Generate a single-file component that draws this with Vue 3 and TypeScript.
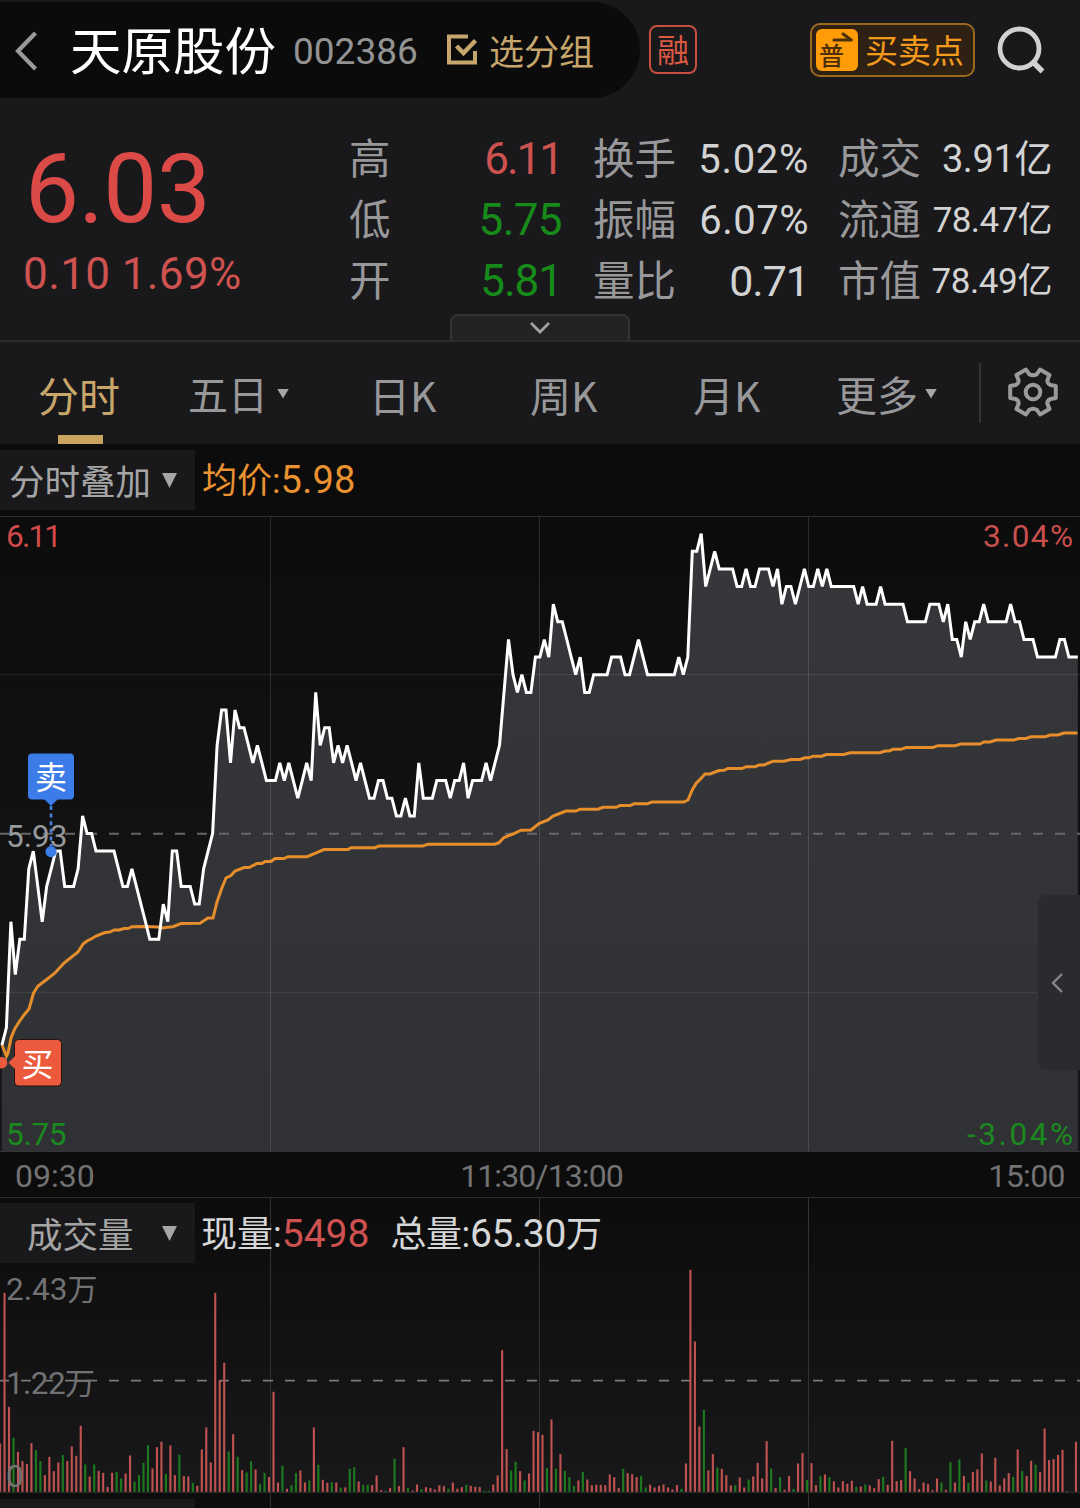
<script setup lang="ts">
interface Quote {
  label: string
  value: string
  tone: 'up' | 'down' | 'plain'
  size: number
  tracking: number
}

const quoteColumns: { name: string; rows: Quote[] }[] = [
  {
    name: 'range',
    rows: [
      { label: '高', value: '6.11', tone: 'up', size: 44, tracking: -2 },
      { label: '低', value: '5.75', tone: 'down', size: 44, tracking: -0.6 },
      { label: '开', value: '5.81', tone: 'down', size: 44, tracking: -1 },
    ],
  },
  {
    name: 'ratio',
    rows: [
      { label: '换手', value: '5.02%', tone: 'plain', size: 40, tracking: 0.7 },
      { label: '振幅', value: '6.07%', tone: 'plain', size: 40, tracking: 0.5 },
      { label: '量比', value: '0.71', tone: 'plain', size: 43, tracking: -1 },
    ],
  },
  {
    name: 'amount',
    rows: [
      { label: '成交', value: '3.91亿', tone: 'plain', size: 38, tracking: -0.4 },
      { label: '流通', value: '78.47亿', tone: 'plain', size: 35, tracking: -0.6 },
      { label: '市值', value: '78.49亿', tone: 'plain', size: 35, tracking: -0.4 },
    ],
  },
]

const STEP = 4.483
const BASE_Y = 833.5
const CENT = 17.64

// Price per minute, in cents above or below the previous close of 5.93
const cents: number[] = [
  -12, -11, -5, -8, -6, -6, -2, -1, -3, -5, -3, -2, -1, -1, -3, -3, -3, -2, 1, 0,
  0, -1, -1, -1, -1, -1, -2, -3, -3, -2, -3, -4, -5, -6, -6, -6, -4, -5, -1, -1,
  -3, -3, -3, -4, -4, -2, -1, 0, 5, 7, 7, 4, 7, 6, 6, 5, 4, 5, 4, 3,
  3, 3, 4, 3, 4, 3, 2, 3, 4, 3, 8, 5, 6, 6, 4, 5, 4, 5, 4, 3,
  4, 3, 2, 2, 3, 3, 2, 2, 1, 1, 2, 1, 1, 4, 2, 2, 2, 3, 3, 3,
  2, 3, 3, 4, 2, 3, 3, 3, 4, 3, 4, 5, 8, 11, 9, 8, 9, 8, 8, 10,
  10, 11, 10, 13, 12, 12, 11, 10, 9, 10, 8, 8, 9, 9, 9, 9, 10, 10, 10, 9,
  9, 10, 11, 10, 9, 9, 9, 9, 9, 9, 9, 10, 9, 10, 16, 16, 17, 14, 15, 16,
  15, 15, 15, 15, 14, 14, 15, 14, 14, 15, 15, 15, 14, 15, 13, 14, 14, 13, 14, 15,
  14, 14, 15, 14, 15, 14, 14, 14, 14, 14, 14, 13, 14, 13, 13, 13, 14, 13, 13, 13,
  13, 13, 12, 12, 12, 12, 12, 13, 13, 13, 12, 13, 11, 11, 10, 12, 11, 12, 12, 13,
  12, 12, 12, 12, 12, 13, 12, 12, 11, 11, 11, 10, 10, 10, 10, 10, 11, 11, 10, 10,
  10,
]

const pricePoints = cents
  .map((c, i) => `${(1.9 + i * STEP).toFixed(1)},${(BASE_Y - c * CENT).toFixed(1)}`)
  .join(' ')
const areaPoints = `1.9,1151 ${pricePoints} 1077.8,1151`

const averagePoints = `2,1045 6.5,1056 8,1053 11,1038 14.7,1029 19,1022 24,1015 29,1009 33.5,993 38,986
 46,980 55,973 64,963 78,952 83,944 87,941 91,939 96,936 105,932.5 110,932 114,930 119,930 124,928.5
 128,928.5 132,926.7 145,926.5 158,927 163,928 167,927.3 173,926.7 181,923.5 200,923.3 208,918 213,918
 217,902 221.5,889 226,878 231,875.5 235,871 244,867.5 249,867.5 257,863.5 262,863.5 265,861.5 271,861.5
 275,858.5 284,858.5 288,856.7 307,856.7 315,853.3 324,849.5 348,849.5 351,847.7 375,847.7 379,845.9
 423,845.9 428,844.2 495,844.2 499,842.6 504,837.5 513,834 521,830.2 531,830 539,823.5 548,820 553,816
 566,811 576,811 580,809.2 598,809.2 603,807.3 616,807.3 620,805.6 630,805.6 634,803.8 647,803.8 652,802
 684,802 688,800 692,790.5 696,783.5 700,779.5 705,774 710,774 719,770.5 724,770.3 728,768.5 742,768.5
 746,766.7 755,766.7 759,765 764,765 773,761.2 784,761.2 791,759.5 800,759.5 805,757.8 809,757.8 813,756.2
 822,756.2 826,754.5 844,754.5 850,752.7 880,752.7 885,751 889,751 893,749.3 901,749.3 906,747.5 933,747.5
 938,745.7 955,745.7 961,744 980,744 984,742 990,742 996,740 1014,740 1019,738.5 1026,738.5 1031,736.8
 1045,736.8 1050,735 1058,735 1064,733 1077.5,733`

// Volume per minute in thirds of a pixel; negative values are falling minutes
const volumes: number[] = [
  145, 597, 255, -162, 120, 92, 83, 146, -125, -92, 50, 105, 62, 88, -110, 92, 136, 108, 198, -82,
  46, -82, 63, 57, 15, 57, -60, -40, 55, 109, -31, -50, -87, -140, 70, 134, 150, -53, 139, 50,
  -111, 47, 46, -27, 18, 127, 193, 88, 597, 334, 387, -121, 173, -105, 65, -58, -92, 67, -24, -57,
  44, 300, 28, -78, 9, -20, -56, 64, 28, -34, 193, -81, 36, 27, -29, 28, -12, 13, -69, -74,
  31, -21, -21, 20, 49, 5, -3, 11, -99, 17, 134, -11, 4, 22, -8, 14, 11, 7, 20, 17,
  -9, 28, 9, 14, -21, 18, 15, 14, -3, -3, 22, 49, 425, 128, -64, -90, 62, -34, 55, 183,
  179, 171, -71, 217, -69, 113, -63, -44, -18, 34, -59, 37, 20, 21, 21, 20, 52, 44, 11, -69,
  56, 53, 44, -48, -13, 21, 13, 18, 22, 13, 7, 20, -9, 85, 666, 451, 196, -246, 64, 113,
  -73, 69, 50, 19, -20, 43, 13, -37, 46, 87, 40, 152, -70, 11, -44, 6, 47, -9, 85, 116,
  -36, 86, 20, -47, 52, -44, 31, 13, 32, 24, 33, -15, 16, -22, 19, 11, 38, -45, 21, 153,
  32, 35, -132, 62, 40, 8, 28, 23, 5, 40, -28, 6, -89, 28, -97, 48, -27, 59, 67, 115,
  -34, 31, 102, 19, 40, 56, -45, 127, -62, 48, 93, -81, 59, 190, 95, 98, 111, 126, -2, 0,
  150,
]

const bars = volumes.map((v, i) => ({
  x: i * STEP - 1,
  y: 1491.8 - Math.abs(v) / 3,
  h: Math.abs(v) / 3,
  fill: v < 0 ? '#1d7a1f' : '#c05351',
}))

const columns = [270.5, 539.5, 808.5]
</script>

<template>
  <div class="screen">
    <header class="topbar">
      <div class="identity">
        <svg class="back" width="28" height="44" viewBox="0 0 28 44">
          <path d="M24.5 4 L7 22 L24.5 40" fill="none" stroke="#9b9b9b" stroke-width="4.2" />
        </svg>
        <span class="name">天原股份</span>
        <span class="code">002386</span>
        <svg class="check" width="32" height="32" viewBox="0 0 32 32" fill="none" stroke="#c6a66c">
          <path d="M22 2.5 H3 V28.5 H29 V17" stroke-width="4" />
          <path d="M10.5 12 L17.5 19 L29.5 6.5" stroke-width="4.4" />
        </svg>
        <span class="group">选分组</span>
      </div>
      <span class="margin-badge">融</span>
      <div class="trade-points">
        <span class="trade-icon">
          <svg width="24" height="11" viewBox="0 0 24 11"><path d="M1 8.8 H20 L11 2.2" fill="none" stroke="#4c300a" stroke-width="3.4" stroke-linecap="round" stroke-linejoin="round" /></svg>
          <b>普</b>
        </span>
        <span class="trade-text">买卖点</span>
      </div>
      <svg class="search" width="50" height="52" viewBox="0 0 50 52" fill="none" stroke="#d0d1d2">
        <circle cx="23.5" cy="23.5" r="19.5" stroke-width="4.8" />
        <path d="M37 37 L46.5 46.5" stroke-width="5.5" />
      </svg>
    </header>

    <section class="summary">
      <div class="last">
        <div class="price">6.03</div>
        <div class="change">0.10 1.69%</div>
      </div>
      <div v-for="col in quoteColumns" :key="col.name" class="quotes" :class="col.name">
        <div v-for="q in col.rows" :key="q.label" class="quote">
          <span class="label">{{ q.label }}</span>
          <span :class="q.tone" :style="{ fontSize: q.size + 'px', letterSpacing: q.tracking + 'px' }">{{ q.value }}</span>
        </div>
      </div>
      <div class="expander">
        <svg width="22" height="14" viewBox="0 0 22 14"><path d="M2 2 L11 11 L20 2" fill="none" stroke="#a2a2a3" stroke-width="2.8" /></svg>
      </div>
    </section>

    <nav class="tabs">
      <span class="tab active">分时</span>
      <span class="tab five">五日<i class="caret small"></i></span>
      <span class="tab day">日K</span>
      <span class="tab week">周K</span>
      <span class="tab month">月K</span>
      <span class="tab more">更多<i class="caret small"></i></span>
      <span class="divider"></span>
      <svg class="gear" width="54" height="54" viewBox="-27 -27 54 54" fill="none" stroke="#9a9a9b" stroke-width="4" stroke-linejoin="round">
        <path d="M-7 -22.5 L-4 -18 Q0 -15.5 4 -18 L7 -22.5 L16.5 -17 L14.3 -11.5 Q14.5 -8 17.5 -7 L22.8 -6 V6 L17.5 7 Q14.5 8 14.3 11.5 L16.5 17 L7 22.5 L4 18 Q0 15.5 -4 18 L-7 22.5 L-16.5 17 L-14.3 11.5 Q-14.5 8 -17.5 7 L-22.8 6 V-6 L-17.5 -7 Q-14.5 -8 -14.3 -11.5 L-16.5 -17 Z" />
        <circle r="7.3" />
      </svg>
    </nav>

    <div class="overlay-row">
      <div class="select">分时叠加<i class="caret"></i></div>
      <span class="average">均价:<em>5.98</em></span>
    </div>

    <div class="price-pane">
      <svg class="plot" width="1080" height="636" viewBox="0 516 1080 636">
        <defs>
          <linearGradient id="area" x1="0" y1="0" x2="0" y2="1">
            <stop offset="0" stop-color="#36373b" />
            <stop offset="1" stop-color="#303135" />
          </linearGradient>
        </defs>
        <polygon :points="areaPoints" fill="url(#area)" />
        <g stroke="#fff" stroke-opacity="0.13">
          <path d="M0 516.5 H1080 M0 1151.5 H1080" />
          <path v-for="x in columns" :key="x" :d="`M${x} 517 V1151`" stroke-opacity="0.13" />
        </g>
        <path d="M0 674.5 H1080 M0 992.5 H1080" stroke="#fff" stroke-opacity="0.07" stroke-width="1.6" />
        <path d="M-1 833.7 H1080" stroke="#65666a" stroke-width="2" stroke-dasharray="10 12" />
        <polyline :points="averagePoints" fill="none" stroke="#e58e2b" stroke-width="3" />
        <polyline :points="pricePoints" fill="none" stroke="#fff" stroke-width="3" />
        <g class="axis">
          <text x="6" y="547" textLength="56" fill="#d14a49">6.11</text>
          <text x="983" y="547" textLength="90" fill="#c94f4d">3.04%</text>
          <text x="6" y="847" fill="#98999b">5.93</text>
          <text x="6" y="1145" textLength="60.5" fill="#1b8a1e">5.75</text>
          <text x="967" y="1145" textLength="106" fill="#1b8a1e">-3.04%</text>
        </g>
        <path d="M51 806 V846" stroke="#4a80dc" stroke-width="2.6" stroke-dasharray="4 3.6" />
        <circle cx="51" cy="851.6" r="5.6" fill="#3d7ee6" />
        <path d="M44 799 H58 L51 806 Z" fill="#3b7ce8" />
        <rect x="28" y="753.5" width="46" height="46" rx="4" fill="#3b7ce8" />
        <text class="mark" x="51" y="789">卖</text>
        <circle cx="1.5" cy="1062.7" r="5.8" fill="#ec5a3e" />
        <rect x="14.5" y="1039.5" width="47" height="46.5" rx="4" fill="#ec5a3e" stroke="#26130f" stroke-width="1" />
        <path d="M16 1055 V1070 L8.5 1062.7 Z" fill="#ec5a3e" />
        <text class="mark" x="37.5" y="1076">买</text>
      </svg>
      <div class="drawer">
        <svg width="14" height="22" viewBox="0 0 14 22"><path d="M12 2 L3 11 L12 20" fill="none" stroke="#85868a" stroke-width="2.4" /></svg>
      </div>
    </div>

    <div class="times"><span>09:30</span><span class="noon">11:30/13:00</span><span class="close">15:00</span></div>

    <div class="volume-pane">
      <svg class="plot" width="1080" height="311" viewBox="0 1197 1080 311">
        <rect x="0" y="1493" width="1080" height="15" fill="#0d0d0d" />
        <rect x="0" y="1499" width="195" height="9" fill="#19191b" />
        <path d="M0 1197.5 H1080 M0 1492.5 H1080" stroke="#2a2a2c" />
        <path v-for="x in columns" :key="x" :d="`M${x} 1197 V1508`" stroke="#313133" />
        <path d="M-1 1380.7 H1080" stroke="#77787a" stroke-width="1.8" stroke-dasharray="10 12" />
        <rect v-for="(b, i) in bars" :key="i" :x="b.x" :y="b.y" width="2.1" :height="b.h" :fill="b.fill" />
        <g class="axis" fill="#727274">
          <text x="6" y="1300">2.43<tspan font-size="30">万</tspan></text>
          <text x="6" y="1394" textLength="89">1.22<tspan font-size="30">万</tspan></text>
          <text x="6" y="1487">0</text>
        </g>
      </svg>
      <div class="volume-head">
        <div class="select volume">成交量<i class="caret"></i></div>
        <span class="now">现量:<em class="up">5498</em></span>
        <span class="total">总量:<em>65.30</em>万</span>
      </div>
    </div>
  </div>
</template>

<style>
body {
  background: #19191b;
}
</style>

<style scoped>
.screen {
  width: 1080px;
  height: 1508px;
  overflow: hidden;
  background: #19191b;
  font-family: Roboto, 'Noto Sans CJK SC', sans-serif;
  color: #d6d7d8;
  white-space: nowrap;
}
em, i, b {
  font-style: normal;
  font-weight: 400;
}
.topbar {
  display: flex;
  align-items: flex-start;
  height: 98px;
}
.identity {
  display: flex;
  align-items: center;
  box-sizing: border-box;
  width: 640px;
  height: 96px;
  margin-top: 2px;
  padding: 0 0 2px 11px;
  background: #0b0b0b;
  border-radius: 0 48px 48px 0;
}
.back {
  margin-top: 4px;
}
.name {
  margin-left: 31px;
  width: 223px;
  color: #fff;
  font-size: 51.5px;
  line-height: 60px;
  padding-top: 8px;
}
.code {
  width: 153px;
  color: #939394;
  font-size: 37px;
  line-height: 44px;
  padding-top: 6px;
}
.check {
  margin-top: 2px;
}
.group {
  margin-left: 11px;
  padding-top: 9px;
  color: #c6a66c;
  font-size: 35px;
  line-height: 44px;
}
.margin-badge {
  box-sizing: border-box;
  width: 48px;
  height: 49px;
  margin: 25px 0 0 9px;
  border: 2px solid #c6503e;
  border-radius: 8px;
  color: #dc5944;
  font-size: 32px;
  line-height: 48px;
  text-align: center;
}
.trade-points {
  display: flex;
  align-items: center;
  box-sizing: border-box;
  width: 165px;
  height: 54px;
  margin: 22.5px 0 0 113px;
  padding-left: 4px;
  border: 2px solid #9c6a1f;
  border-radius: 10px;
  background: #2e2114;
}
.trade-icon {
  display: flex;
  flex-direction: column;
  width: 42px;
  height: 42px;
  border-radius: 6px;
  background: #ff9c08;
}
.trade-icon svg {
  margin: 3px 0 0 16px;
}
.trade-icon b {
  margin-left: 3px;
  color: #4c300a;
  font-size: 25px;
  font-weight: 500;
  line-height: 29px;
}
.trade-text {
  margin-left: 7px;
  padding-top: 5px;
  color: #f39a1d;
  font-size: 33px;
  line-height: 44px;
}
.search {
  margin: 25px 0 0 21px;
}
.summary {
  position: relative;
  display: flex;
  box-sizing: border-box;
  height: 244px;
  border-bottom: 2px solid #2a2a2c;
}
.last {
  width: 349px;
  box-sizing: border-box;
  padding-left: 23px;
}
.price {
  margin: 35px 0 0 2px;
  color: #dc4a48;
  font-size: 96px;
  line-height: 112px;
  letter-spacing: -0.5px;
}
.change {
  margin-top: 3px;
  color: #cd5250;
  font-size: 44px;
  line-height: 52px;
  letter-spacing: 0.4px;
}
.quotes {
  padding-top: 31px;
}
.quote {
  display: flex;
  justify-content: space-between;
  align-items: center;
  height: 61px;
}
.label {
  color: #98989a;
  font-size: 41.5px;
}
.quotes.range {
  width: 213px;
}
.quotes.ratio {
  width: 216px;
  margin-left: 31px;
}
.quotes.amount {
  width: 214px;
  margin-left: 29px;
}
.quote span {
  line-height: 61px;
}
.up {
  color: #cd5250;
}
.down {
  color: #178b1a;
}
.plain {
  color: #d3d3d4;
}
.expander {
  position: absolute;
  left: 450px;
  bottom: 0;
  box-sizing: border-box;
  width: 180px;
  height: 26px;
  border: 2px solid #343436;
  border-bottom: 0;
  border-radius: 8px 8px 0 0;
  background: #232325;
  display: flex;
  justify-content: center;
  padding-top: 5px;
}
.tabs {
  display: flex;
  height: 102px;
  color: #98989a;
  font-size: 41px;
  line-height: 108px;
}
.tab {
  display: flex;
  align-items: center;
  box-sizing: border-box;
}
.tab.active {
  position: relative;
  width: 150px;
  padding: 10px 0 0 38px;
  color: #c9a66a;
}
.tab.active::after {
  content: '';
  position: absolute;
  left: 58px;
  bottom: 0;
  width: 45px;
  height: 9px;
  background: #caa45f;
}
.tab.five {
  width: 182px;
  padding: 8px 0 0 38px;
  font-size: 40px;
}
.tab.day, .tab.week, .tab.month {
  font-family: 'Noto Sans CJK SC', sans-serif;
  line-height: 110px;
  padding-top: 2px;
}
.tab.day {
  width: 160px;
  padding-left: 37px;
}
.tab.week {
  width: 162px;
  padding-left: 38px;
}
.tab.month {
  width: 162px;
  padding-left: 39px;
}
.tab.more {
  width: 163px;
  padding: 8px 0 0 20px;
}
.divider {
  width: 2px;
  height: 60px;
  margin-top: 21px;
  background: #343436;
}
.gear {
  margin: 23px 0 0 25px;
}
.caret {
  display: inline-block;
  width: 15px;
  height: 15px;
  margin-top: -5px;
  background: #a6a6a7;
  clip-path: polygon(0 0, 100% 0, 50% 100%);
}
.caret.small {
  width: 12px;
  height: 10px;
  margin: -7px 0 0 9px;
}
.tab.more .caret {
  margin-left: 7px;
}
.overlay-row {
  display: flex;
  align-items: flex-start;
  box-sizing: border-box;
  height: 72px;
  padding-top: 6px;
  background: #0c0c0c;
}
.select {
  display: flex;
  align-items: center;
  justify-content: space-between;
  box-sizing: border-box;
  width: 195px;
  height: 60px;
  padding: 6px 18px 0 9px;
  background: #19191b;
  color: #a5a5a6;
  font-size: 35.5px;
  line-height: 60px;
}
.select.volume {
  padding-left: 27px;
}
.average {
  margin-left: 7px;
  color: #ea9231;
  font-size: 35px;
  line-height: 61px;
}
.average em {
  font-size: 38px;
  letter-spacing: 0.3px;
}
.price-pane {
  position: relative;
  height: 636px;
  background: linear-gradient(#0c0c0c, #17171a);
}
.plot {
  display: block;
  overflow: visible;
}
.axis {
  font-size: 31.5px;
}
.mark {
  fill: #fff;
  font-size: 32px;
  text-anchor: middle;
}
.drawer {
  position: absolute;
  right: 0;
  top: 379px;
  width: 42px;
  height: 175px;
  border-radius: 8px 0 0 8px;
  background: #2a2b2e;
  display: flex;
  align-items: center;
  padding-left: 12px;
  box-sizing: border-box;
}
.times {
  display: flex;
  justify-content: space-between;
  height: 45px;
  padding: 0 15px;
  background: #0c0c0c;
  color: #727273;
  font-size: 32px;
  line-height: 49px;
}
.noon {
  letter-spacing: -0.9px;
}
.close {
  letter-spacing: -0.6px;
}
.volume-pane {
  position: relative;
  height: 311px;
  background: linear-gradient(#0c0c0c, #19191b);
}
.volume-head {
  position: absolute;
  top: 6px;
  left: 0;
  display: flex;
  font-size: 36px;
  line-height: 62px;
}
.volume-head em {
  font-size: 39px;
}
.now {
  margin-left: 6px;
}
.total {
  margin-left: 21px;
  letter-spacing: -0.4px;
}
</style>
